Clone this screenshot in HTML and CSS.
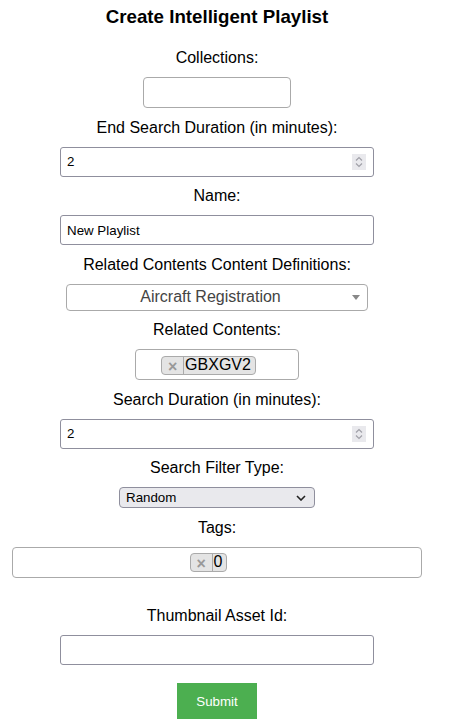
FILE: index.html
```html
<!DOCTYPE html>
<html lang="en">
<head>
<meta charset="utf-8">
<title>Create Intelligent Playlist</title>
<link rel="stylesheet" href="styles.css">
</head>
<body>
<form class="form">
  <h3 class="title">Create Intelligent Playlist</h3>

  <div class="field">
    <label class="label">Collections:</label>
    <div class="s2-multi s2-collections"><span class="s2-search"></span></div>
  </div>

  <div class="field">
    <label class="label">End Search Duration (in minutes):</label>
    <div class="numbox">
      <input class="numinput" type="text" value="2">
      <span class="spinner">
        <svg width="14" height="16" viewBox="0 0 14 16"><path d="M4 6.5 L7 3.5 L10 6.5" fill="none" stroke="#a0a0a8" stroke-width="1.2"/><path d="M4 9.5 L7 12.5 L10 9.5" fill="none" stroke="#a0a0a8" stroke-width="1.2"/></svg>
      </span>
    </div>
  </div>

  <div class="field">
    <label class="label">Name:</label>
    <input class="textinput" type="text" value="New Playlist">
  </div>

  <div class="field">
    <label class="label">Related Contents Content Definitions:</label>
    <div class="s2-single">
      <span class="s2-single-text">Aircraft Registration</span>
      <svg class="s2-arrow" width="8" height="5" viewBox="0 0 8 5"><path d="M0 0 H8 L4 5 Z" fill="#888"/></svg>
    </div>
  </div>

  <div class="field">
    <label class="label">Related Contents:</label>
    <div class="s2-multi s2-related">
      <span class="chip"><span class="chip-x">×</span><span class="chip-text">GBXGV2</span></span><span class="s2-search"></span>
    </div>
  </div>

  <div class="field">
    <label class="label">Search Duration (in minutes):</label>
    <div class="numbox">
      <input class="numinput" type="text" value="2">
      <span class="spinner">
        <svg width="14" height="16" viewBox="0 0 14 16"><path d="M4 6.5 L7 3.5 L10 6.5" fill="none" stroke="#a0a0a8" stroke-width="1.2"/><path d="M4 9.5 L7 12.5 L10 9.5" fill="none" stroke="#a0a0a8" stroke-width="1.2"/></svg>
      </span>
    </div>
  </div>

  <div class="field">
    <label class="label">Search Filter Type:</label>
    <div class="selectbox">
      <span class="select-text">Random</span>
      <svg width="10" height="6" viewBox="0 0 10 6"><path d="M1 1 L5 5 L9 1" fill="none" stroke="#222" stroke-width="1.6"/></svg>
    </div>
  </div>

  <div class="field field-tags">
    <label class="label">Tags:</label>
    <div class="s2-multi s2-tags">
      <span class="chip"><span class="chip-x">×</span><span class="chip-text">0</span></span><span class="s2-search"></span>
    </div>
  </div>

  <div class="field field-last">
    <label class="label">Thumbnail Asset Id:</label>
    <input class="textinput" type="text" value="">
  </div>

  <button class="submit" type="button">Submit</button>
</form>
</body>
</html>
```

FILE: styles.css
```css
html, body {
  margin: 0;
  padding: 0;
  background: #fff;
}

body {
  font-family: "Liberation Sans", Arial, sans-serif;
  color: #000;
}

.form {
  width: 434px;
  display: flex;
  flex-direction: column;
  align-items: center;
}

.title {
  font-size: 18.72px;
  font-weight: bold;
  line-height: 22px;
  margin: 6px 0 20px;
}

.field {
  display: flex;
  flex-direction: column;
  align-items: center;
  margin-bottom: 9.5px;
}

.field-tags {
  margin-bottom: 28.5px;
}

.field-last {
  margin-bottom: 18px;
}

.label {
  display: block;
  font-size: 16px;
  line-height: 18px;
  padding-top: 1px;
  margin-bottom: 10px;
}

/* select2 multiple */
.s2-multi {
  box-sizing: border-box;
  height: 31px;
  border: 1px solid #aaa;
  border-radius: 4px;
  display: flex;
  justify-content: center;
  align-items: flex-start;
  padding-top: 6px;
  background: #fff;
}

.s2-collections { width: 148px; }
.s2-related { width: 164px; }
.s2-tags { width: 410px; padding-top: 5px; }

.s2-search {
  display: inline-block;
  width: 17px;
  height: 18px;
}

.chip {
  display: inline-flex;
  box-sizing: border-box;
  height: 19px;
  border: 1px solid #aaa;
  border-radius: 4px;
  background: #e4e4e4;
  align-items: stretch;
}

.chip-x {
  width: 21px;
  border-right: 1px solid #aaa;
  color: #999;
  font-weight: bold;
  font-size: 16px;
  line-height: 19px;
  text-align: center;
}

.chip-text {
  font-size: 16px;
  line-height: 16px;
  padding: 0 4px 0 1px;
  color: #000;
}

/* select2 single */
.s2-single {
  box-sizing: border-box;
  width: 302px;
  height: 27px;
  border: 1px solid #aaa;
  border-radius: 4px;
  display: flex;
  align-items: center;
  padding: 0 7px 0 8px;
}

.s2-single-text {
  flex: 1;
  text-align: center;
  font-size: 16px;
  color: #444;
  padding-right: 6px;
}

.s2-arrow {
  display: block;
  margin-top: 1px;
}

/* number input */
.numbox {
  box-sizing: border-box;
  width: 314px;
  height: 30px;
  border: 1px solid #8f8f9d;
  border-radius: 3px;
  display: flex;
  align-items: center;
  padding: 0 7px 0 6px;
  background: #fff;
}

.numinput {
  flex: 1;
  min-width: 0;
  border: none;
  outline: none;
  padding: 0;
  font-family: "Liberation Sans", Arial, sans-serif;
  font-size: 13.33px;
  color: #000;
  background: transparent;
}

.spinner {
  display: flex;
  align-items: center;
  justify-content: center;
  width: 14px;
  height: 16px;
  background: #e9e9ed;
}

.spinner svg {
  display: block;
}

.textinput {
  box-sizing: border-box;
  width: 314px;
  height: 30px;
  border: 1px solid #8f8f9d;
  border-radius: 3px;
  padding: 0 6px;
  margin: 0;
  font-family: "Liberation Sans", Arial, sans-serif;
  font-size: 13.33px;
  color: #000;
  outline: none;
}

/* native-looking select */
.selectbox {
  box-sizing: border-box;
  width: 196px;
  height: 21px;
  border: 1px solid #8f8f9d;
  border-radius: 4px;
  background: #e9e9ed;
  display: flex;
  align-items: center;
  padding: 0 8px 0 6px;
}

.select-text {
  flex: 1;
  text-align: left;
  font-size: 13.33px;
  color: #000;
}

.selectbox svg {
  display: block;
}

.submit {
  width: 80px;
  height: 36px;
  border: none;
  border-radius: 0;
  background: #4caf50;
  color: #fff;
  font-family: "Liberation Sans", Arial, sans-serif;
  font-size: 13.33px;
  padding: 0;
  margin: 0;
}
```
